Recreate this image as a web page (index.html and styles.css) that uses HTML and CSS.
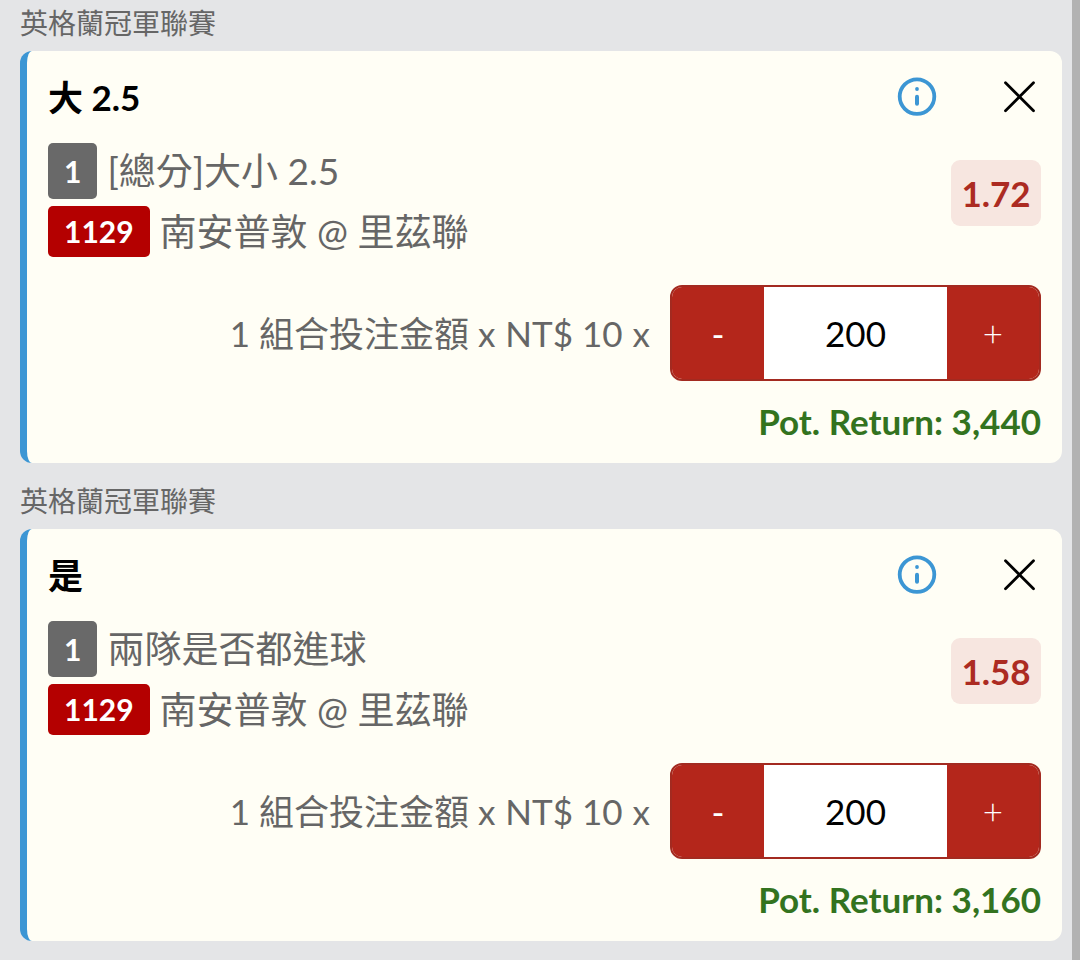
FILE: index.html
```html
<!DOCTYPE html>
<html lang="zh-Hant">
<head>
<meta charset="utf-8">
<meta name="viewport" content="width=device-width, initial-scale=1">
<title>投注單</title>
<link rel="stylesheet" href="styles.css">
</head>
<body>
<main class="slip">
  <section class="bet">
    <h2 class="league">英格蘭冠軍聯賽</h2>
    <article class="card">
      <header class="card-head">
        <h3 class="pick">大 2.5</h3>
        <button class="icon-btn" type="button" aria-label="資訊">
          <svg class="icon" viewBox="0 0 44 44" aria-hidden="true"><circle cx="22" cy="21.6" r="17.3" fill="none" stroke="#3c96d4" stroke-width="3.8"/><circle cx="22" cy="14" r="1.9" fill="#3c96d4"/><path d="M22 21.8v7" stroke="#3c96d4" stroke-width="4" stroke-linecap="round"/></svg>
        </button>
        <button class="icon-btn" type="button" aria-label="移除">
          <svg class="icon" viewBox="0 0 44 44" aria-hidden="true"><path d="M8.5 7.8l28 28M36.5 7.8l-28 28" fill="none" stroke="#000" stroke-width="2.8" stroke-linecap="round"/></svg>
        </button>
      </header>
      <div class="detail">
        <div class="lines">
          <p class="line"><span class="badge badge-count">1</span><span>[總分]大小 2.5</span></p>
          <p class="line"><span class="badge badge-code">1129</span><span>南安普敦 @ 里茲聯</span></p>
        </div>
        <strong class="odds">1.72</strong>
      </div>
      <div class="stake">
        <label class="stake-label" for="stake-1"><span>1 組合投注金額 x</span><span>NT$ 10</span><span>x</span></label>
        <div class="stepper">
          <button class="step step-down" type="button" aria-label="減少">-</button>
          <input class="amount" id="stake-1" type="text" inputmode="numeric" value="200">
          <button class="step" type="button" aria-label="增加">+</button>
        </div>
      </div>
      <p class="return">Pot. Return: 3,440</p>
    </article>
  </section>

  <section class="bet">
    <h2 class="league">英格蘭冠軍聯賽</h2>
    <article class="card">
      <header class="card-head">
        <h3 class="pick">是</h3>
        <button class="icon-btn" type="button" aria-label="資訊">
          <svg class="icon" viewBox="0 0 44 44" aria-hidden="true"><circle cx="22" cy="21.6" r="17.3" fill="none" stroke="#3c96d4" stroke-width="3.8"/><circle cx="22" cy="14" r="1.9" fill="#3c96d4"/><path d="M22 21.8v7" stroke="#3c96d4" stroke-width="4" stroke-linecap="round"/></svg>
        </button>
        <button class="icon-btn" type="button" aria-label="移除">
          <svg class="icon" viewBox="0 0 44 44" aria-hidden="true"><path d="M8.5 7.8l28 28M36.5 7.8l-28 28" fill="none" stroke="#000" stroke-width="2.8" stroke-linecap="round"/></svg>
        </button>
      </header>
      <div class="detail">
        <div class="lines">
          <p class="line"><span class="badge badge-count">1</span><span>兩隊是否都進球</span></p>
          <p class="line"><span class="badge badge-code">1129</span><span>南安普敦 @ 里茲聯</span></p>
        </div>
        <strong class="odds">1.58</strong>
      </div>
      <div class="stake">
        <label class="stake-label" for="stake-2"><span>1 組合投注金額 x</span><span>NT$ 10</span><span>x</span></label>
        <div class="stepper">
          <button class="step step-down" type="button" aria-label="減少">-</button>
          <input class="amount" id="stake-2" type="text" inputmode="numeric" value="200">
          <button class="step" type="button" aria-label="增加">+</button>
        </div>
      </div>
      <p class="return">Pot. Return: 3,160</p>
    </article>
  </section>
</main>
</body>
</html>
```

FILE: styles.css
```css
* {
  box-sizing: border-box;
}

body,
h2,
h3,
p {
  margin: 0;
}

body {
  background: #e4e5e7;
  color: #666;
  font-family: Lato, "Noto Sans CJK TC", sans-serif;
  font-size: 35px;
  line-height: 44px;
}

button,
input {
  margin: 0;
  padding: 0;
  border: 0;
  font: inherit;
}

.slip {
  display: flex;
  flex-direction: column;
  gap: 18px;
  min-height: 100vh;
  padding: 3px 10px 19px 20px;
  border-right: 8px solid #b2b2b2;
}

.league {
  padding-bottom: 8px;
  font-size: 28px;
  font-weight: 400;
  line-height: 40px;
}

.card {
  padding: 0 21px 20px;
  border-left: 7px solid #3c96d4;
  border-radius: 12px;
  background: #fffef5;
}

.card-head {
  display: flex;
  align-items: center;
  gap: 58px;
  height: 92px;
}

.pick {
  flex: 1;
  color: #000;
  font-size: 35px;
  font-weight: 700;
}

.icon-btn {
  width: 44px;
  height: 44px;
  background: none;
}

.icon {
  display: block;
  width: 44px;
  height: 44px;
}

.detail {
  display: flex;
  align-items: flex-start;
  justify-content: space-between;
}

.lines {
  display: grid;
  gap: 7px;
  font-size: 37px;
}

.line {
  display: flex;
  align-items: center;
  gap: 10px;
}

.badge {
  padding: 0 16px;
  border-radius: 5px;
  color: #fff;
  font-size: 30px;
  font-weight: 700;
}

.badge-count {
  background: #696969;
  line-height: 56px;
}

.badge-code {
  background: #b40000;
  line-height: 51px;
}

.odds {
  min-width: 90px;
  margin-top: 17px;
  border-radius: 9px;
  background: #f7e6e0;
  color: #ac2b22;
  line-height: 66px;
  text-align: center;
}

.stake {
  display: flex;
  align-items: center;
  justify-content: flex-end;
  gap: 20px;
  padding-top: 28px;
}

.stake-label {
  display: flex;
  gap: 10px;
}

.stepper {
  display: flex;
  height: 96px;
  overflow: hidden;
  border: 2px solid #a32a20;
  border-radius: 12px;
}

.step {
  width: 92px;
  background: #b4261b;
  color: #fff;
  font-weight: 300;
}

.step-down {
  font-weight: 400;
}

.amount {
  width: 183px;
  background: #fff;
  color: #000;
  text-align: center;
}

.return {
  padding-top: 18px;
  color: #33731f;
  font-weight: 700;
  text-align: right;
}
```
